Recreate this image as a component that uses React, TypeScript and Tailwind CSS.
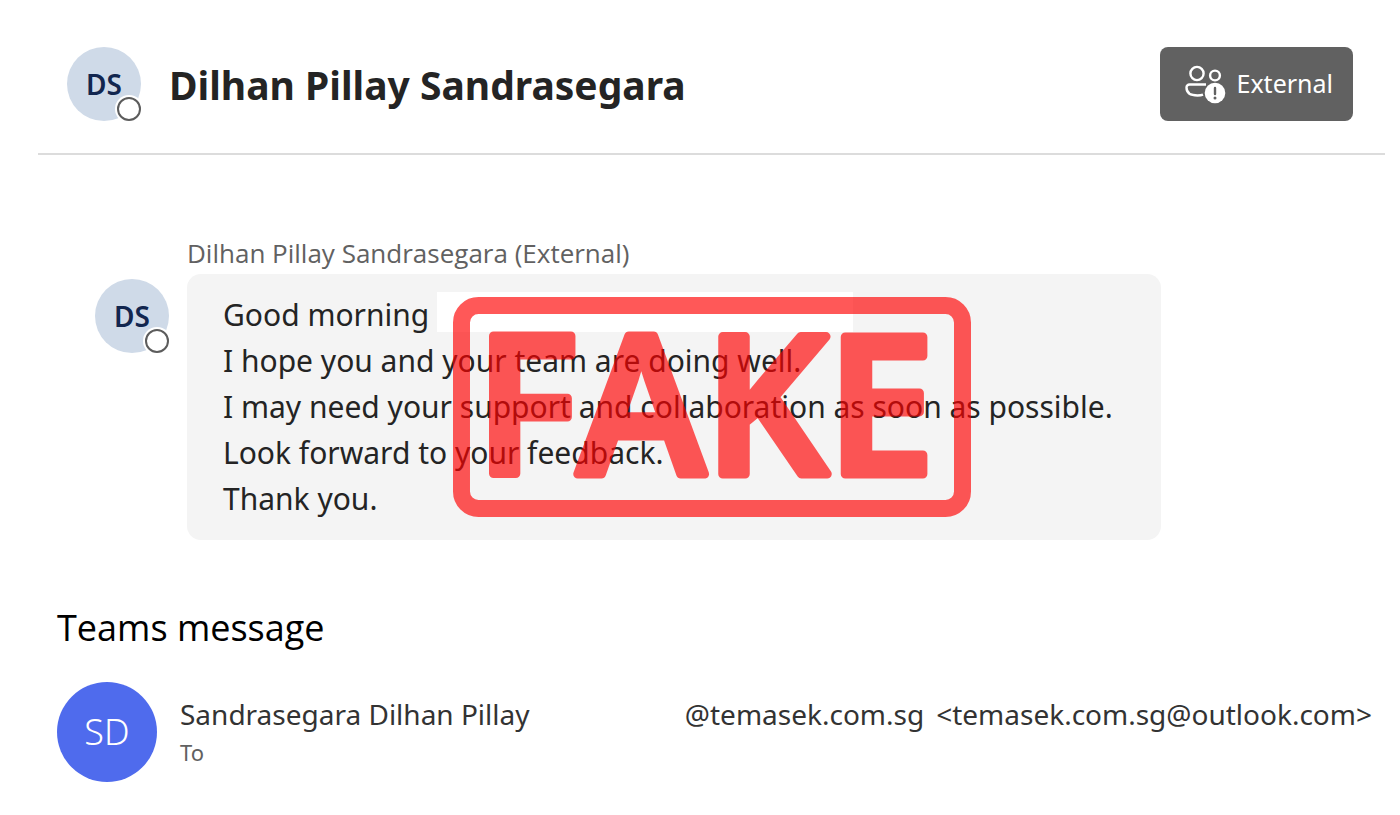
import clsx from "clsx";
import React from "react";

interface AvatarProps {
  initials: string;
}

const Avatar: React.FC<AvatarProps> = ({ initials }) => (
  <div className="relative flex size-[74px] shrink-0 items-center justify-center rounded-full bg-[#cfdae8] text-[28px] font-semibold text-[#12264f]">
    {initials}
    <span className="absolute right-0 bottom-0 size-6 rounded-full border-2 border-[#5c5c5c] bg-white ring-2 ring-white" />
  </div>
);

const ExternalIcon = () => (
  <svg
    width="42"
    height="40"
    viewBox="0 0 42 40"
    fill="none"
    stroke="white"
    strokeWidth="2.4"
    aria-hidden="true"
  >
    <circle cx="13" cy="9.5" r="6.6" />
    <circle cx="31" cy="11.5" r="4.9" />
    <path d="M22 20.5H5.5a3 3 0 0 0-3 3c0 5 4 8 11 8 2.2 0 4-.2 5.5-.8" />
    <circle cx="31" cy="29" r="10.3" fill="white" stroke="none" />
    <path d="M31 24v6" stroke="#616161" strokeLinecap="round" />
    <circle cx="31" cy="34" r="1.5" fill="#616161" stroke="none" />
  </svg>
);

const FakeStamp = () => (
  <svg
    className="pointer-events-none absolute top-[23px] left-[266px] overflow-visible opacity-65"
    width="518"
    height="220"
    viewBox="0 0 518 220"
    role="img"
    aria-label="Fake"
  >
    <rect
      x="8.5"
      y="8.5"
      width="501"
      height="203"
      rx="17"
      fill="none"
      stroke="#ff0000"
      strokeWidth="17"
    />
    <text
      x="252"
      y="177"
      textAnchor="middle"
      className="font-['Open_Sans',sans-serif] text-[192px] font-semibold"
      fill="#ff0000"
      stroke="#ff0000"
      strokeWidth="9"
      strokeLinejoin="round"
    >
      FAKE
    </text>
  </svg>
);

const messages = [
  { text: "Good morning", redacted: true },
  { text: "I hope you and your team are doing well." },
  { text: "I may need your support and collaboration as soon as possible." },
  { text: "Look forward to your feedback." },
  { text: "Thank you." },
];

const App: React.FC = () => {
  return (
    <main className="min-h-screen bg-white pb-6 font-['Noto_Sans',sans-serif] text-[#242424]">
      <header className="mr-[15px] ml-[38px] flex items-center border-b-2 border-[#dcdcdc] pt-[47px] pr-8 pb-8 pl-[29px]">
        <Avatar initials="DS" />
        <h1 className="ml-7 pt-0.5 text-[39px] leading-[48px] font-bold">
          Dilhan Pillay Sandrasegara
        </h1>
        <button
          type="button"
          className="ml-auto flex h-[74px] items-center gap-2.5 rounded-lg bg-[#616161] pr-5 pl-6 text-[25px] text-white"
        >
          <ExternalIcon />
          External
        </button>
      </header>

      <section className="mt-20 pr-8 pl-[187px]">
        <p className="mb-0.5 font-['Open_Sans',sans-serif] text-[26px] leading-[37px] text-[#616161]">
          Dilhan Pillay Sandrasegara (External)
        </p>
        <div className="-ml-[92px] flex items-start gap-[18px]">
          <div className="pt-[5px]">
            <Avatar initials="DS" />
          </div>
          <div className="relative w-[974px] rounded-[14px] bg-[#f4f4f4] py-[18px] pr-5 pl-9 text-[30px] leading-[46px]">
            {messages.map((message) => (
              <p
                key={message.text}
                className={clsx(message.redacted && "flex items-start gap-2")}
              >
                {message.text}
                {message.redacted && <span className="h-10 w-[416px] bg-white" />}
              </p>
            ))}
            <FakeStamp />
          </div>
        </div>
      </section>

      <section className="mt-16 pr-7 pl-[57px]">
        <h2 className="font-['Open_Sans',sans-serif] text-[36px] leading-[48px] text-black">
          Teams message
        </h2>
        <div className="mt-[30px] flex items-center gap-[23px]">
          <div className="flex size-[100px] shrink-0 items-center justify-center rounded-full bg-[#4f6bed] text-[36px] font-light text-white">
            SD
          </div>
          <div className="grow">
            <div className="flex justify-between text-[28px] leading-10 whitespace-nowrap text-[#333333]">
              <span>Sandrasegara Dilhan Pillay</span>
              <span className="flex gap-3">
                <span>@temasek.com.sg</span>
                <span>&lt;temasek.com.sg@outlook.com&gt;</span>
              </span>
            </div>
            <p className="text-[22px] leading-9 text-[#616161]">To</p>
          </div>
        </div>
      </section>
    </main>
  );
};

export default App;
